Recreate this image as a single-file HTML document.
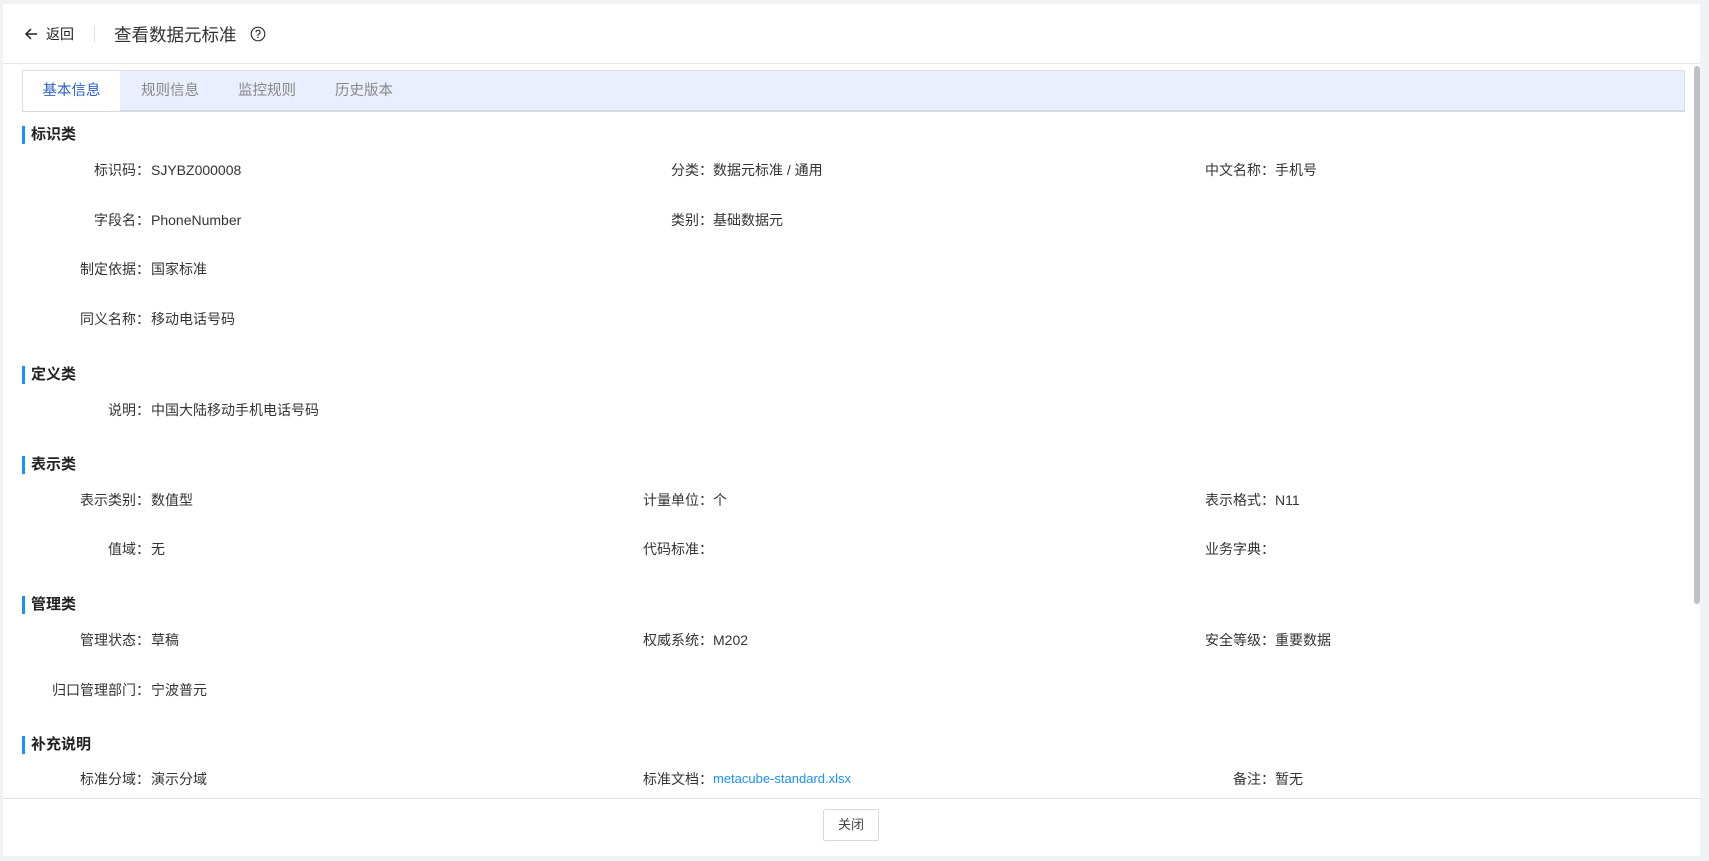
<!DOCTYPE html>
<html><head><meta charset="utf-8"><style>
*{margin:0;padding:0;box-sizing:border-box}
body{width:1709px;height:861px;background:#f0f2f5;font-family:"Liberation Sans","Noto Sans CJK SC",sans-serif;color:#333;position:relative;overflow:hidden}
.panel{position:absolute;left:3px;top:4px;width:1697px;height:852px;background:#fff}
.hdr{position:absolute;left:0;top:0;width:100%;height:60px;border-bottom:1px solid #e4e6eb}
.a{position:absolute}
.tabs{position:absolute;left:19px;top:66px;width:1663px;height:42px;background:#e9effd;border:1px solid #d9dde6;border-bottom:2px solid #d5d9e2}
.tab{position:absolute;top:0;height:40px;line-height:40px;font-size:14.5px;color:#888}
.sec{position:absolute;left:19px;font-size:15px;font-weight:bold;color:#222;border-left:3px solid #1890ff;padding-left:6px;height:18px;line-height:18px}
.lb{position:absolute;font-size:14px;text-align:right;width:140px;line-height:20px;color:#333}
.v{position:absolute;font-size:14px;line-height:20px;color:#333}
.foot{position:absolute;left:0;top:794px;width:100%;border-top:1px solid #dfe1e6}
.btn{position:absolute;left:820px;top:805px;width:56px;height:32px;border:1px solid #d9d9d9;border-radius:2px;font-size:13px;text-align:center;line-height:30px;color:#444}
.sb{position:absolute;left:1691px;top:62px;width:6px;height:538px;background:#c1c1c1;border-radius:3px}
</style></head><body>
<div class="panel">
<div class="hdr">
<svg class="a" style="left:21px;top:23px" width="14" height="14" viewBox="0 0 14 14"><path d="M13 7H2M7 2L2 7l5 5" stroke="#222" stroke-width="1.5" fill="none"/></svg>
<div class="a" style="left:43px;top:20px;font-size:14px;line-height:20px;color:#222">返回</div>
<div class="a" style="left:91px;top:22px;width:1px;height:17px;background:#e0e0e0"></div>
<div class="a" style="left:111px;top:18px;font-size:17.5px;line-height:26px;color:#333">查看数据元标准</div>
<svg class="a" style="left:247px;top:22px" width="16" height="16" viewBox="0 0 16 16"><circle cx="8" cy="8" r="6.8" stroke="#333" stroke-width="1.2" fill="none"/><path d="M6 6.3a2 2 0 1 1 2.6 1.9c-.5.2-.6.5-.6 1v.6" stroke="#333" stroke-width="1.2" fill="none"/><circle cx="8" cy="11.4" r=".8" fill="#333"/></svg>
</div>
<div class="tabs">
<div class="tab" style="left:0;width:97px;background:#fff;color:#2f5fc6;text-align:center">基本信息</div>
<div class="tab" style="left:118px">规则信息</div>
<div class="tab" style="left:215px">监控规则</div>
<div class="tab" style="left:312px">历史版本</div>
</div>
<div class="sb"></div>

<div class="sec" style="top:122px">标识类</div>
<div class="lb" style="left:7px;top:156px">标识码：</div><div class="v" style="left:148px;top:156px">SJYBZ000008</div>
<div class="lb" style="left:570px;top:156px">分类：</div><div class="v" style="left:710px;top:156px">数据元标准 / 通用</div>
<div class="lb" style="left:1132px;top:156px">中文名称：</div><div class="v" style="left:1272px;top:156px">手机号</div>
<div class="lb" style="left:7px;top:206px">字段名：</div><div class="v" style="left:148px;top:206px">PhoneNumber</div>
<div class="lb" style="left:570px;top:206px">类别：</div><div class="v" style="left:710px;top:206px">基础数据元</div>
<div class="lb" style="left:7px;top:255px">制定依据：</div><div class="v" style="left:148px;top:255px">国家标准</div>
<div class="lb" style="left:7px;top:305px">同义名称：</div><div class="v" style="left:148px;top:305px">移动电话号码</div>

<div class="sec" style="top:362px">定义类</div>
<div class="lb" style="left:7px;top:396px">说明：</div><div class="v" style="left:148px;top:396px">中国大陆移动手机电话号码</div>

<div class="sec" style="top:452px">表示类</div>
<div class="lb" style="left:7px;top:486px">表示类别：</div><div class="v" style="left:148px;top:486px">数值型</div>
<div class="lb" style="left:570px;top:486px">计量单位：</div><div class="v" style="left:710px;top:486px">个</div>
<div class="lb" style="left:1132px;top:486px">表示格式：</div><div class="v" style="left:1272px;top:486px">N11</div>
<div class="lb" style="left:7px;top:535px">值域：</div><div class="v" style="left:148px;top:535px">无</div>
<div class="lb" style="left:570px;top:535px">代码标准：</div>
<div class="lb" style="left:1132px;top:535px">业务字典：</div>

<div class="sec" style="top:592px">管理类</div>
<div class="lb" style="left:7px;top:626px">管理状态：</div><div class="v" style="left:148px;top:626px">草稿</div>
<div class="lb" style="left:570px;top:626px">权威系统：</div><div class="v" style="left:710px;top:626px">M202</div>
<div class="lb" style="left:1132px;top:626px">安全等级：</div><div class="v" style="left:1272px;top:626px">重要数据</div>
<div class="lb" style="left:7px;top:676px">归口管理部门：</div><div class="v" style="left:148px;top:676px">宁波普元</div>

<div class="sec" style="top:732px">补充说明</div>
<div class="lb" style="left:7px;top:765px">标准分域：</div><div class="v" style="left:148px;top:765px">演示分域</div>
<div class="lb" style="left:570px;top:765px">标准文档：</div><div class="v" style="left:710px;top:765px;color:#1890ff;font-size:13px">metacube-standard.xlsx</div>
<div class="lb" style="left:1132px;top:765px">备注：</div><div class="v" style="left:1272px;top:765px">暂无</div>

<div class="foot" style="height:58px;background:#fff"></div>
<div class="btn">关闭</div>
</div>
</body></html>
